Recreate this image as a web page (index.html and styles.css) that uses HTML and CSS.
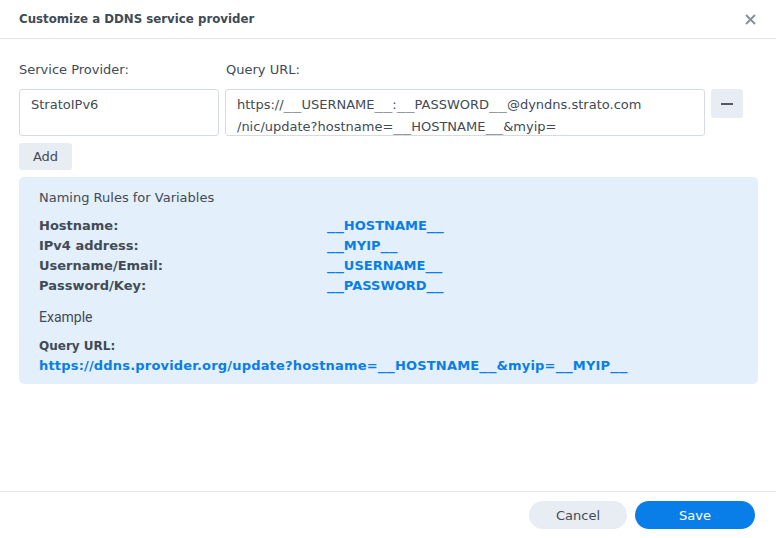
FILE: index.html
```html
<!DOCTYPE html>
<html lang="en">
<head>
    <meta charset="UTF-8">
    <title>Customize a DDNS service provider</title>
    <link rel="stylesheet" href="styles.css">
</head>
<body>
    <div class="dialog">
        <div class="dialog-header">
            <span class="dialog-title">Customize a DDNS service provider</span>
            <svg class="dialog-close" width="11" height="11" viewBox="0 0 11 11">
                <path d="M1 1L10 10M10 1L1 10" stroke="#8a9098" stroke-width="2"/>
            </svg>
        </div>
        <div class="dialog-body">
            <div class="field-labels">
                <label class="label-provider">Service Provider:</label>
                <label class="label-url">Query URL:</label>
            </div>
            <div class="field-row">
                <div class="input provider-input">StratoIPv6</div>
                <div class="input url-input">https://<span class="us">__</span>USERNAME<span class="us">__</span>:<span class="us">__</span>PASSWORD<span class="us">__</span>@dyndns.strato.com<br>/nic/update?hostname=<span class="us">__</span>HOSTNAME<span class="us">__</span>&amp;myip=</div>
                <button class="btn-remove"><span class="minus"></span></button>
            </div>
            <button class="btn-add">Add</button>
            <div class="info-box">
                <div class="info-heading">Naming Rules for Variables</div>
                <table class="rules">
                    <tr><td>Hostname:</td><td class="var"><span class="us">__</span>HOSTNAME<span class="us">__</span></td></tr>
                    <tr><td>IPv4 address:</td><td class="var"><span class="us">__</span>MYIP<span class="us">__</span></td></tr>
                    <tr><td>Username/Email:</td><td class="var"><span class="us">__</span>USERNAME<span class="us">__</span></td></tr>
                    <tr><td>Password/Key:</td><td class="var"><span class="us">__</span>PASSWORD<span class="us">__</span></td></tr>
                </table>
                <div class="example-heading">Example</div>
                <div class="example-label">Query URL:</div>
                <div class="example-url">https://ddns.provider.org/update?hostname=<span class="us">__</span>HOSTNAME<span class="us">__</span>&amp;myip=<span class="us">__</span>MYIP<span class="us">__</span></div>
            </div>
        </div>
        <div class="dialog-footer">
            <button class="btn btn-cancel">Cancel</button>
            <button class="btn btn-save">Save</button>
        </div>
    </div>
</body>
</html>
```

FILE: styles.css
```css
body {
    margin: 0;
    background: #fff;
    font-family: "DejaVu Sans", Verdana, sans-serif;
    color: #414b55;
}
.dialog {
    width: 776px;
    height: 538px;
    display: flex;
    flex-direction: column;
}
.dialog-header {
    height: 38px;
    border-bottom: 1px solid #e3e7ec;
    display: flex;
    align-items: center;
    justify-content: space-between;
    padding: 0 20px 0 19px;
}
.dialog-title {
    font-weight: bold;
    font-size: 11.8px;
    color: #414b55;
}
.dialog-close {
    display: block;
}
.dialog-body {
    flex: 1;
    padding: 22px 18px 0 19px;
}
.field-labels {
    display: flex;
    font-size: 13px;
    height: 18px;
    line-height: 18px;
}
.label-provider {
    width: 207px;
}
.field-row {
    display: flex;
    margin-top: 10px;
    align-items: flex-start;
}
.input {
    height: 47px;
    box-sizing: border-box;
    border: 1px solid #d6dbe2;
    border-radius: 3px;
    padding: 4px 11px 3px;
    font-size: 13px;
    line-height: 22px;
    color: #414b55;
}
/* wide underscores, as in the original UI font */
.us {
    font-family: "DejaVu Sans Mono", monospace;
    font-size: 14px;
    line-height: 0;
}
.url-input .us {
    font-size: 14.8px;
}
.provider-input {
    width: 200px;
}
.url-input {
    width: 480px;
    margin-left: 6px;
    white-space: nowrap;
}
.btn-remove {
    margin-left: 6px;
    width: 32px;
    height: 29px;
    border: none;
    border-radius: 3px;
    background: #e8ecf3;
    display: flex;
    align-items: center;
    justify-content: center;
    padding: 0;
}
.minus {
    width: 12px;
    height: 2px;
    background: #505a64;
}
.btn-add {
    display: block;
    margin-top: 7px;
    height: 27px;
    width: 53px;
    border: none;
    border-radius: 3px;
    background: #e8ecf3;
    font-family: "DejaVu Sans", sans-serif;
    font-size: 13px;
    color: #414b55;
    padding: 0 0 1px;
}
.info-box {
    margin-top: 7px;
    background: #e3effb;
    border-radius: 5px;
    padding: 13px 20px 14px 20px;
    height: 207px;
    box-sizing: border-box;
}
.info-heading {
    font-size: 13px;
    line-height: 16px;
}
.rules {
    border-collapse: collapse;
    margin-top: 10px;
    font-size: 13px;
    font-weight: bold;
}
.rules td {
    padding: 0;
    height: 20px;
    line-height: 20px;
}
.rules td:first-child {
    width: 288px;
}
.var {
    color: #0a7ee6;
}
.example-heading {
    margin-top: 12px;
    font-family: Roboto, sans-serif;
    font-size: 14px;
    line-height: 18px;
}
.example-label {
    margin-top: 10px;
    font-weight: bold;
    font-size: 12px;
    line-height: 20px;
}
.example-url {
    font-size: 13px;
    font-weight: bold;
    line-height: 20px;
    letter-spacing: 0.18px;
    color: #0a7ee6;
}
.dialog-footer {
    height: 47px;
    border-top: 1px solid #e3e7ec;
    display: flex;
    justify-content: flex-end;
    align-items: flex-start;
    padding: 9px 21px 0 0;
    box-sizing: border-box;
}
.btn {
    height: 28px;
    border: none;
    border-radius: 14px;
    font-family: "DejaVu Sans", sans-serif;
    font-size: 13px;
    padding: 0;
}
.btn-cancel {
    width: 98px;
    background: #e8ecf3;
    color: #414b55;
}
.btn-save {
    width: 120px;
    margin-left: 8px;
    background: #0a7ee8;
    color: #fff;
}
```
